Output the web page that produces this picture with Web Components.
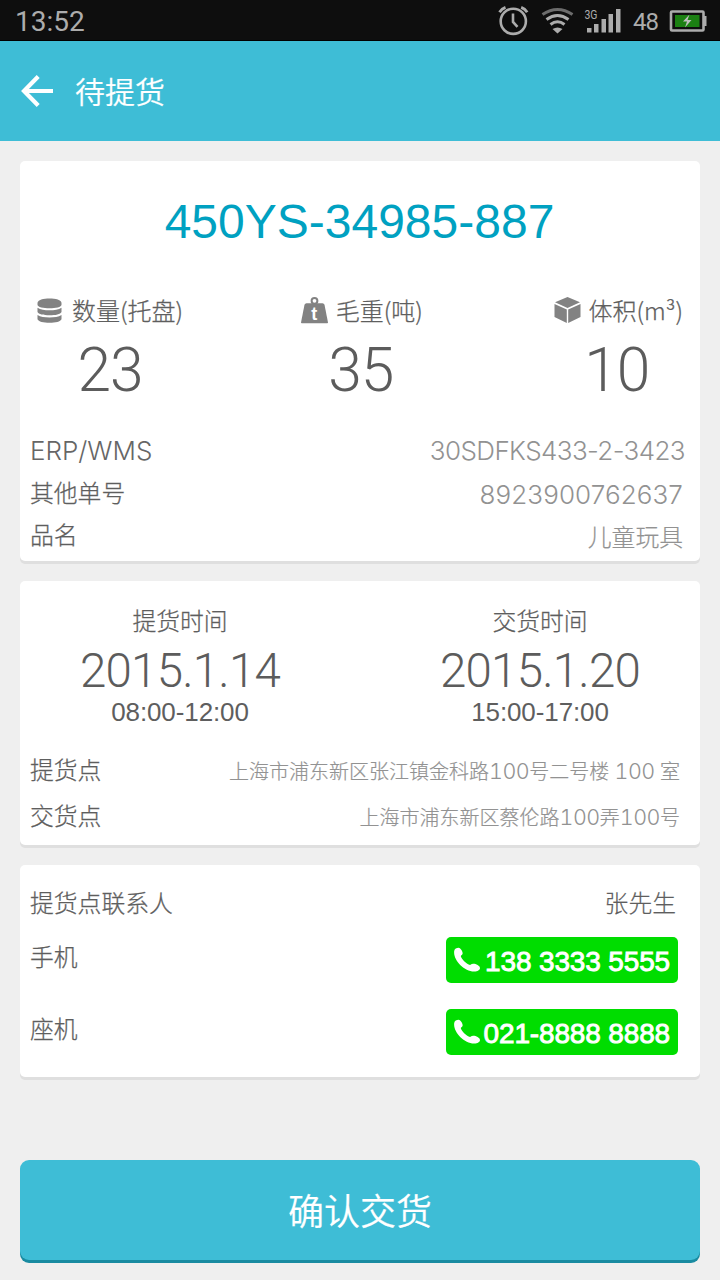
<!DOCTYPE html>
<html lang="zh-CN">
<head>
<meta charset="utf-8">
<title>待提货</title>
<style>
html,body{margin:0;padding:0}
body{width:720px;height:1280px;overflow:hidden;background:#efefef;color:#5e5e5e;font-family:Inter,"Noto Sans CJK SC",sans-serif}
</style>
</head>
<body>
<delivery-page></delivery-page>
<script>
const define = (name, html) => {
  const t = document.createElement('template');
  t.innerHTML = html;
  customElements.define(name, class extends HTMLElement {
    constructor() {
      super();
      this.attachShadow({ mode: 'open' }).appendChild(t.content.cloneNode(true));
    }
  });
};

define('status-bar', `
<style>
:host{display:flex;align-items:center;height:41px;box-sizing:border-box;padding:0 13px 0 15px;background:#0e0e0e;border-bottom:1px solid #000;color:#acacac;font-family:Roboto,sans-serif}
.time{font-size:28px;line-height:40px;letter-spacing:0;padding-top:3px;flex:1}
.num{font-size:24px;line-height:40px;margin:3px 11px 0 11px;letter-spacing:-1px}
svg{display:block}
</style>
<span class="time">13:52</span>
<svg width="32" height="40" viewBox="497 0 32 40" fill="none" stroke="#acacac" stroke-width="2.6"><circle cx="513.3" cy="21.3" r="12.6"/><path d="M513 13.500v8.500l4.500 4.800"/><path d="M499.500 12.200Q501.500 8.800 505.500 7.400M527.200 12.200Q525.200 8.800 521.200 7.400" stroke-width="2.8"/></svg>
<svg style="margin-left:11px" width="36" height="40" viewBox="540 0 36 40" fill="none" stroke="#acacac" stroke-width="3"><path d="M542.500 14.500Q557.500 4.500 572.500 14.500" stroke="#6c6c6c"/><path d="M546.500 19.500Q557.500 11.500 568.500 19.500M550.500 24.500Q557.500 19 564.500 24.500"/><path d="M552.500 29q5-3 10 0l-5 4.500z" fill="#acacac" stroke="none"/></svg>
<svg style="margin-left:8px" width="38" height="40" viewBox="584 0 38 40" fill="#acacac"><text x="584.500" y="19" font-family="Roboto" font-size="13" textLength="13" lengthAdjust="spacingAndGlyphs">3G</text><path d="M587 28h4.500v4.500H587zM594 24h4.500v8.500H594zM601.500 19h4.500v13.500h-4.500zM608.500 14h4.500v18.500h-4.500zM616 9h4.500v23.500H616z"/></svg>
<span class="num">48</span>
<svg width="38" height="40" viewBox="669 0 38 40"><rect x="671" y="11.500" width="32.500" height="19" rx="1" fill="none" stroke="#acacac" stroke-width="2.600"/><path d="M704 16h2.500v10H704z" fill="#acacac"/><path d="M675 15h24.500v12H675z" fill="#1b8012"/><path d="M689.500 14.500l-6.500 7h4l-2 6 6.500-7.500h-4z" fill="#bdbdbd"/></svg>
`);

define('app-bar', `
<style>
:host{display:flex;align-items:center;height:100px;padding-left:21px;background:#3ebdd6;color:#fff;font-size:30px;line-height:44px}
svg{display:block;margin-right:22px}
span{font-family:"Noto Sans CJK SC",sans-serif;font-weight:350;-webkit-text-stroke:.2px;padding-bottom:3px}
</style>
<svg width="32" height="32" viewBox="0 0 32 32" fill="none" stroke="#fff" stroke-width="4.200"><path d="M17.200 1.500L3 16l14.200 14.500M3 16h29"/></svg>
<span><slot></slot></span>
`);

define('ui-card', `
<style>
:host{display:block;box-sizing:border-box;margin:0 20px;background:#fff;border-radius:5px;box-shadow:0 3px 0 #dfdfdf}
</style><slot></slot>`);

define('order-number', `
<style>
:host{display:block;text-align:center;font:48px/60px "Liberation Sans",Arial,sans-serif;color:#00a1c1;padding-right:1px}
</style><slot></slot>`);

define('stat-item', `
<style>
:host{display:flex;flex-direction:column;align-items:center}
.label{display:flex;align-items:center;gap:var(--gap,8px);height:30px;font:300 24px/30px "Noto Sans CJK SC",sans-serif;white-space:nowrap;color:#5e5e5e;-webkit-text-stroke:.25px}
.value{font:300 60.500px/60px Roboto,sans-serif;margin-top:16px;letter-spacing:-1px;color:#5c5c5c;padding-right:var(--pull,0)}
</style>
<div class="label"><slot name="icon"></slot><span><slot></slot></span></div>
<div class="value"><slot name="value"></slot></div>`);

define('stack-icon', `
<style>:host,svg{display:block}</style>
<svg width="25" height="25" viewBox="0.500 0.500 25 25" fill="#828282"><path d="M1 5.500C1 2.300 7 1 13 1s12 1.300 12 4.500v1.700c0 2.300-6 3.600-12 3.600S1 9.500 1 7.200z"/><path d="M1 10.200c3 2 7 2.500 12 2.500s9-.5 12-2.500v4.300c-1 2.400-6 3.300-12 3.300S2 16.900 1 14.500z"/><path d="M1 17.500c3 1.900 7 2.400 12 2.400s9-.5 12-2.400v4.200c-1 2.500-6 3.500-12 3.500S2 24.200 1 21.700z"/></svg>`);

define('weight-icon', `
<style>:host,svg{display:block}</style>
<svg width="27" height="28" viewBox="0 0 27 28"><circle cx="13.500" cy="4.800" r="2.900" fill="none" stroke="#828282" stroke-width="2"/><path d="M5.500 7.200h16q1.500 0 2 1.500L27 26.500q0 .8-.8.8H.8q-.8 0-.8-.8L3.500 8.700Q4 7.200 5.500 7.200z" fill="#828282"/><text x="13.300" y="23.500" text-anchor="middle" fill="#fff" font-family="Liberation Sans" font-weight="700" font-size="18">t</text></svg>`);

define('cube-icon', `
<style>:host,svg{display:block}</style>
<svg width="27" height="28" viewBox="0 0 27 28" fill="#828282"><path d="M13.500 1L26 6.300 13.500 12 1 6.300z"/><path d="M.5 8l12.300 5.400V27L.5 21zM26.500 8l-12.300 5.400V27l12.300-6z"/></svg>`);

define('info-row', `
<style>
:host{display:flex;justify-content:space-between;height:var(--h,42px);line-height:var(--h,42px);white-space:nowrap;font-weight:300}
.label{margin-left:10px;font-size:23.800px;color:#5e5e5e}
.value{margin:var(--drop,0) var(--end,17px) 0 0;font-size:var(--size,23.800px);letter-spacing:var(--track,0);color:var(--tone,#929292);-webkit-text-stroke:var(--stroke,.2px)}
::slotted(b){display:block;padding-top:1px;font-weight:300;-webkit-text-stroke:.25px}
::slotted(i){font-style:normal;font-size:21.500px;letter-spacing:-.5px;font-feature-settings:"tnum";-webkit-text-stroke:0}
::slotted(em){font-style:normal;font-size:26px;letter-spacing:0;color:#666}
</style>
<span class="label"><slot name="label"></slot></span><span class="value"><slot></slot></span>`);

define('time-slot', `
<style>
:host{display:flex;flex-direction:column;align-items:center;white-space:nowrap}
.title{font:300 23.800px/28px "Noto Sans CJK SC",sans-serif;-webkit-text-stroke:.25px}
.date{font:300 47.500px/60px Roboto,sans-serif;margin-top:7px;letter-spacing:-.8px;color:#5c5c5c}
.hours{font:26px/26px "Liberation Sans",Arial,sans-serif;margin-top:-2px;letter-spacing:-.1px}
</style>
<div class="title"><slot></slot></div><div class="date"><slot name="date"></slot></div><div class="hours"><slot name="hours"></slot></div>`);

define('phone-button', `
<style>
:host{display:flex;align-items:center;justify-content:space-between;width:232px;height:46px;box-sizing:border-box;padding:0 8px;border-radius:5px;background:#00dd00;color:#fff;font:28px/46px "Liberation Sans",Arial,sans-serif;letter-spacing:-.15px}
svg{display:block;flex:none;margin-right:-4px}
span{-webkit-text-stroke:.9px #fff;padding-top:3px}
</style>
<svg width="27" height="26" viewBox="0 0 27 26" fill="#fff"><path d="M.2 4C.5 1.800 2.600.8 4.600.8 6.500.8 9.200 5 8.500 7 8 8.200 6.600 8.300 6.900 9.500 8 12.500 12.500 16.900 15.300 17.800 16.800 18.200 17.200 17 19 16.800c2.500-.2 7 1.800 7 4.200 0 2.200-3 3.800-6 3.600C10 24-1 13 .2 4z"/></svg><span><slot></slot></span>`);

define('contact-row', `
<style>
:host{display:flex;justify-content:space-between;height:46px;padding:0 22px 0 10px;font-weight:300;font-size:23.800px;line-height:42px}
span{-webkit-text-stroke:.25px}
</style><span><slot></slot></span><slot name="action"></slot>`);

define('primary-button', `
<style>
:host{display:block;margin:0 20px;height:100px;border-radius:9px;background:#3ebdd6;box-shadow:0 3px 0 #198ba1;text-align:center;color:#fff;font:350 36px/98px "Noto Sans CJK SC",sans-serif;-webkit-text-stroke:.2px}
</style><slot></slot>`);

define('delivery-page', `
<style>
:host{display:block;width:720px;height:1280px;background:#efefef;color:#5e5e5e}
.order{margin-top:20px;height:400px;padding-top:31px}
.stats{display:flex;justify-content:space-between;padding:0 17px;margin-top:43px;height:135px}
.mid{margin-right:13px}
.trip{margin-top:20px;height:264px;padding-top:25px}
.slots{display:grid;grid-template-columns:320px 320px;gap:40px;height:141px}
.contact{margin-top:20px;height:212px;padding-top:15px}
.num{--size:26px;--stroke:0}
.addr{--h:46px;--size:20px;--end:20px;--drop:1px}
</style>
<status-bar></status-bar>
<app-bar>待提货</app-bar>
<ui-card class="order">
  <order-number>450YS-34985-887</order-number>
  <div class="stats">
    <stat-item style="--gap:10px"><stack-icon slot="icon"></stack-icon>数量(托盘)<span slot="value">23</span></stat-item>
    <stat-item class="mid" style="--pull:2px"><weight-icon slot="icon"></weight-icon>毛重(吨)<span slot="value">35</span></stat-item>
    <stat-item style="--pull:3px"><cube-icon slot="icon"></cube-icon>体积(m³)<span slot="value">10</span></stat-item>
  </div>
  <info-row class="num" style="--end:15px;--track:-.6px"><em slot="label">ERP/WMS</em>30SDFKS433-2-3423</info-row>
  <info-row class="num" style="--track:.1px;--drop:2px"><b slot="label">其他单号</b>8923900762637</info-row>
  <info-row style="--drop:3px"><b slot="label">品名</b>儿童玩具</info-row>
</ui-card>
<ui-card class="trip">
  <div class="slots">
    <time-slot>提货时间<span slot="date">2015.1.14</span><span slot="hours">08:00-12:00</span></time-slot>
    <time-slot>交货时间<span slot="date">2015.1.20</span><span slot="hours">15:00-17:00</span></time-slot>
  </div>
  <info-row class="addr"><b slot="label">提货点</b>上海市浦东新区张江镇金科路<i>100</i>号二号楼<i> 100 </i>室</info-row>
  <info-row class="addr"><b slot="label">交货点</b>上海市浦东新区蔡伦路<i>100</i>弄<i>100</i>号</info-row>
</ui-card>
<ui-card class="contact">
  <info-row style="--h:46px;--tone:#5e5e5e;--end:24px;--drop:1px"><b slot="label">提货点联系人</b>张先生</info-row>
  <contact-row style="margin-top:11px">手机<phone-button slot="action">138 3333 5555</phone-button></contact-row>
  <contact-row style="margin-top:26px">座机<phone-button slot="action">021-8888 8888</phone-button></contact-row>
</ui-card>
<primary-button style="margin-top:83px">确认交货</primary-button>
`);
</script>
</body>
</html>
